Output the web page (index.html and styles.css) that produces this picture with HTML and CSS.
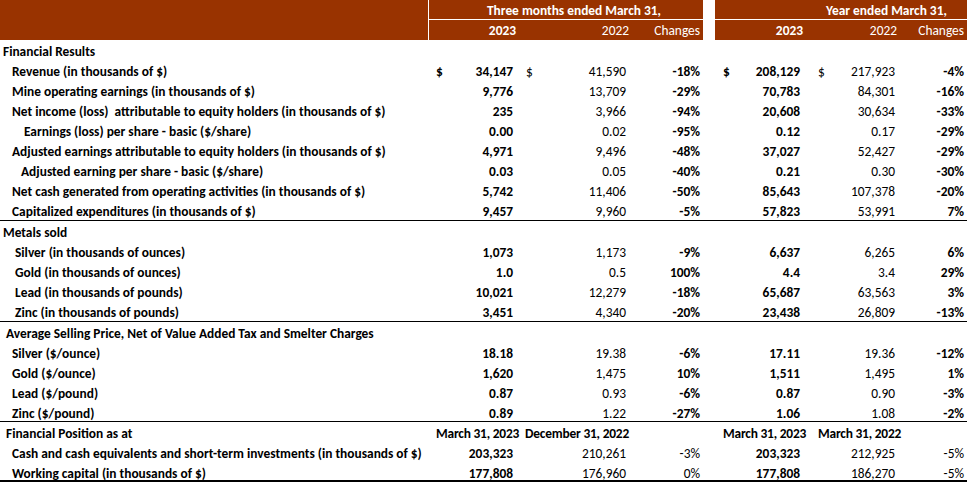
FILE: index.html
```html
<!DOCTYPE html>
<html>
<head>
<meta charset="utf-8">
<link rel="stylesheet" href="styles.css">
</head>
<body>
<div class="sheet">
  <div class="head">
    <div class="head-label"></div>
    <div class="head-sep"></div>
    <div class="head-block q">
      <div class="head-title q-title">Three months ended March 31,</div>
      <div class="head-sub">
        <div class="hc cur b">2023</div>
        <div class="hc prev">2022</div>
        <div class="hc chg">Changes</div>
      </div>
    </div>
    <div class="head-gap"></div>
    <div class="head-block y">
      <div class="head-title y-title">Year ended March 31,</div>
      <div class="head-sub">
        <div class="hc cur b">2023</div>
        <div class="hc prev">2022</div>
        <div class="hc chg">Changes</div>
      </div>
    </div>
  </div>

  <div class="row"><div class="lbl l0">Financial Results</div></div>
  <div class="row">
    <div class="lbl l1">Revenue (in thousands of $)</div>
    <div class="c c1 b"><span>$</span><span>34,147</span></div>
    <div class="c c2"><span>$</span><span>41,590</span></div>
    <div class="c c3 b"><span>-18%</span></div>
    <div class="gap"></div>
    <div class="c c4 b"><span>$</span><span>208,129</span></div>
    <div class="c c5"><span>$</span><span>217,923</span></div>
    <div class="c c6 b"><span>-4%</span></div>
  </div>
  <div class="row">
    <div class="lbl l1">Mine operating earnings (in thousands of $)</div>
    <div class="c c1 b"><span>9,776</span></div>
    <div class="c c2"><span>13,709</span></div>
    <div class="c c3 b"><span>-29%</span></div>
    <div class="gap"></div>
    <div class="c c4 b"><span>70,783</span></div>
    <div class="c c5"><span>84,301</span></div>
    <div class="c c6 b"><span>-16%</span></div>
  </div>
  <div class="row">
    <div class="lbl l1 pre">Net income (loss)  attributable to equity holders (in thousands of $)</div>
    <div class="c c1 b"><span>235</span></div>
    <div class="c c2"><span>3,966</span></div>
    <div class="c c3 b"><span>-94%</span></div>
    <div class="gap"></div>
    <div class="c c4 b"><span>20,608</span></div>
    <div class="c c5"><span>30,634</span></div>
    <div class="c c6 b"><span>-33%</span></div>
  </div>
  <div class="row">
    <div class="lbl l3">Earnings (loss) per share - basic ($/share)</div>
    <div class="c c1 b"><span>0.00</span></div>
    <div class="c c2"><span>0.02</span></div>
    <div class="c c3 b"><span>-95%</span></div>
    <div class="gap"></div>
    <div class="c c4 b"><span>0.12</span></div>
    <div class="c c5"><span>0.17</span></div>
    <div class="c c6 b"><span>-29%</span></div>
  </div>
  <div class="row">
    <div class="lbl l1">Adjusted earnings attributable to equity holders (in thousands of $)</div>
    <div class="c c1 b"><span>4,971</span></div>
    <div class="c c2"><span>9,496</span></div>
    <div class="c c3 b"><span>-48%</span></div>
    <div class="gap"></div>
    <div class="c c4 b"><span>37,027</span></div>
    <div class="c c5"><span>52,427</span></div>
    <div class="c c6 b"><span>-29%</span></div>
  </div>
  <div class="row">
    <div class="lbl l2">Adjusted earning per share - basic ($/share)</div>
    <div class="c c1 b"><span>0.03</span></div>
    <div class="c c2"><span>0.05</span></div>
    <div class="c c3 b"><span>-40%</span></div>
    <div class="gap"></div>
    <div class="c c4 b"><span>0.21</span></div>
    <div class="c c5"><span>0.30</span></div>
    <div class="c c6 b"><span>-30%</span></div>
  </div>
  <div class="row">
    <div class="lbl l1">Net cash generated from operating activities (in thousands of $)</div>
    <div class="c c1 b"><span>5,742</span></div>
    <div class="c c2"><span>11,406</span></div>
    <div class="c c3 b"><span>-50%</span></div>
    <div class="gap"></div>
    <div class="c c4 b"><span>85,643</span></div>
    <div class="c c5"><span>107,378</span></div>
    <div class="c c6 b"><span>-20%</span></div>
  </div>
  <div class="row end tall">
    <div class="lbl l1">Capitalized expenditures (in thousands of $)</div>
    <div class="c c1 b"><span>9,457</span></div>
    <div class="c c2"><span>9,960</span></div>
    <div class="c c3 b"><span>-5%</span></div>
    <div class="gap"></div>
    <div class="c c4 b"><span>57,823</span></div>
    <div class="c c5"><span>53,991</span></div>
    <div class="c c6 b"><span>7%</span></div>
  </div>

  <div class="row"><div class="lbl l0">Metals sold</div></div>
  <div class="row">
    <div class="lbl l4">Silver (in thousands of ounces)</div>
    <div class="c c1 b"><span>1,073</span></div>
    <div class="c c2"><span>1,173</span></div>
    <div class="c c3 b"><span>-9%</span></div>
    <div class="gap"></div>
    <div class="c c4 b"><span>6,637</span></div>
    <div class="c c5"><span>6,265</span></div>
    <div class="c c6 b"><span>6%</span></div>
  </div>
  <div class="row">
    <div class="lbl l4">Gold (in thousands of ounces)</div>
    <div class="c c1 b"><span>1.0</span></div>
    <div class="c c2"><span>0.5</span></div>
    <div class="c c3 b"><span>100%</span></div>
    <div class="gap"></div>
    <div class="c c4 b"><span>4.4</span></div>
    <div class="c c5"><span>3.4</span></div>
    <div class="c c6 b"><span>29%</span></div>
  </div>
  <div class="row">
    <div class="lbl l4">Lead (in thousands of pounds)</div>
    <div class="c c1 b"><span>10,021</span></div>
    <div class="c c2"><span>12,279</span></div>
    <div class="c c3 b"><span>-18%</span></div>
    <div class="gap"></div>
    <div class="c c4 b"><span>65,687</span></div>
    <div class="c c5"><span>63,563</span></div>
    <div class="c c6 b"><span>3%</span></div>
  </div>
  <div class="row end tall">
    <div class="lbl l4">Zinc (in thousands of pounds)</div>
    <div class="c c1 b"><span>3,451</span></div>
    <div class="c c2"><span>4,340</span></div>
    <div class="c c3 b"><span>-20%</span></div>
    <div class="gap"></div>
    <div class="c c4 b"><span>23,438</span></div>
    <div class="c c5"><span>26,809</span></div>
    <div class="c c6 b"><span>-13%</span></div>
  </div>

  <div class="row"><div class="lbl l5">Average Selling Price, Net of Value Added Tax and Smelter Charges</div></div>
  <div class="row">
    <div class="lbl l1">Silver ($/ounce)</div>
    <div class="c c1 b"><span>18.18</span></div>
    <div class="c c2"><span>19.38</span></div>
    <div class="c c3 b"><span>-6%</span></div>
    <div class="gap"></div>
    <div class="c c4 b"><span>17.11</span></div>
    <div class="c c5"><span>19.36</span></div>
    <div class="c c6 b"><span>-12%</span></div>
  </div>
  <div class="row">
    <div class="lbl l1">Gold ($/ounce)</div>
    <div class="c c1 b"><span>1,620</span></div>
    <div class="c c2"><span>1,475</span></div>
    <div class="c c3 b"><span>10%</span></div>
    <div class="gap"></div>
    <div class="c c4 b"><span>1,511</span></div>
    <div class="c c5"><span>1,495</span></div>
    <div class="c c6 b"><span>1%</span></div>
  </div>
  <div class="row">
    <div class="lbl l1">Lead ($/pound)</div>
    <div class="c c1 b"><span>0.87</span></div>
    <div class="c c2"><span>0.93</span></div>
    <div class="c c3 b"><span>-6%</span></div>
    <div class="gap"></div>
    <div class="c c4 b"><span>0.87</span></div>
    <div class="c c5"><span>0.90</span></div>
    <div class="c c6 b"><span>-3%</span></div>
  </div>
  <div class="row end">
    <div class="lbl l1">Zinc ($/pound)</div>
    <div class="c c1 b"><span>0.89</span></div>
    <div class="c c2"><span>1.22</span></div>
    <div class="c c3 b"><span>-27%</span></div>
    <div class="gap"></div>
    <div class="c c4 b"><span>1.06</span></div>
    <div class="c c5"><span>1.08</span></div>
    <div class="c c6 b"><span>-2%</span></div>
  </div>

  <div class="row">
    <div class="lbl l5">Financial Position as at</div>
    <div class="c c1 b date"><span>March 31, 2023</span></div>
    <div class="c c2 b date"><span>December 31, 2022</span></div>
    <div class="c c3"></div>
    <div class="gap"></div>
    <div class="c c4 b date"><span>March 31, 2023</span></div>
    <div class="c c5 b date"><span>March 31, 2022</span></div>
    <div class="c c6"></div>
  </div>
  <div class="row">
    <div class="lbl l1">Cash and cash equivalents and short-term investments (in thousands of $)</div>
    <div class="c c1 b"><span>203,323</span></div>
    <div class="c c2"><span>210,261</span></div>
    <div class="c c3"><span>-3%</span></div>
    <div class="gap"></div>
    <div class="c c4 b"><span>203,323</span></div>
    <div class="c c5"><span>212,925</span></div>
    <div class="c c6"><span>-5%</span></div>
  </div>
  <div class="row last">
    <div class="lbl l1">Working capital (in thousands of $)</div>
    <div class="c c1 b"><span>177,808</span></div>
    <div class="c c2"><span>176,960</span></div>
    <div class="c c3"><span>0%</span></div>
    <div class="gap"></div>
    <div class="c c4 b"><span>177,808</span></div>
    <div class="c c5"><span>186,270</span></div>
    <div class="c c6"><span>-5%</span></div>
  </div>
</div>
</body>
</html>
```

FILE: styles.css
```css
html, body {
  margin: 0;
  padding: 0;
  background: #ffffff;
}
body {
  font-family: Carlito, Lato, "Liberation Sans", sans-serif;
  font-size: 13.4px;
  color: #000000;
}
.sheet {
  width: 967px;
}
.head {
  display: grid;
  grid-template-columns: 428px 1px 274px 12px 252px;
  height: 40px;
}
.head-label {
  background: #993300;
}
.head-sep {
  background: #ffffff;
}
.head-gap {
  background: #ffffff;
}
.head-block {
  display: flex;
  flex-direction: column;
  background: #993300;
  color: #ffffff;
}
.head-title {
  height: 20px;
  line-height: 18px;
  padding-top: 2px;
  font-weight: bold;
  text-align: center;
  border-bottom: 1px solid #ffffff;
  box-sizing: border-box;
  white-space: nowrap;
}
.q-title {
  padding-left: 16px;
}
.y-title {
  padding-left: 91px;
}
.head-sub {
  height: 20px;
  line-height: 18px;
  padding-top: 2px;
  box-sizing: border-box;
  display: grid;
}
.q .head-sub {
  grid-template-columns: 90px 113px 71px;
}
.y .head-sub {
  grid-template-columns: 91px 94px 67px;
}
.hc {
  text-align: right;
  padding-right: 3px;
}
.b {
  font-weight: bold;
}
.row {
  display: grid;
  grid-template-columns: 428px 91px 113px 71px 12px 91px 94px 67px;
  height: 20px;
  line-height: 18px;
  box-sizing: border-box;
  padding-top: 3px;
}
.row.end {
  border-bottom: 1px solid #000000;
}
.row.tall {
  height: 21px;
}
.row.last {
  border-bottom: 2px solid #000000;
}
.lbl {
  font-weight: bold;
  white-space: nowrap;
}
.pre {
  white-space: pre;
}
.l0 { padding-left: 3px; }
.l1 { padding-left: 12px; }
.l2 { padding-left: 21px; }
.l3 { padding-left: 24px; }
.l4 { padding-left: 15px; }
.l5 { padding-left: 6px; }
.c {
  display: flex;
  justify-content: space-between;
  white-space: nowrap;
}
.c span:only-child {
  margin-left: auto;
}
.c1 { padding-left: 8px; padding-right: 6px; }
.c2 { padding-left: 7px; padding-right: 6px; }
.c3 { padding-right: 3px; }
.c4 { padding-left: 8px; padding-right: 6px; }
.c5 { padding-left: 12px; padding-right: 5px; }
.c6 { padding-right: 3px; }
.c.date {
  padding-right: 3px;
  letter-spacing: -0.2px;
}
.c2.date {
  padding-left: 0;
}
```
